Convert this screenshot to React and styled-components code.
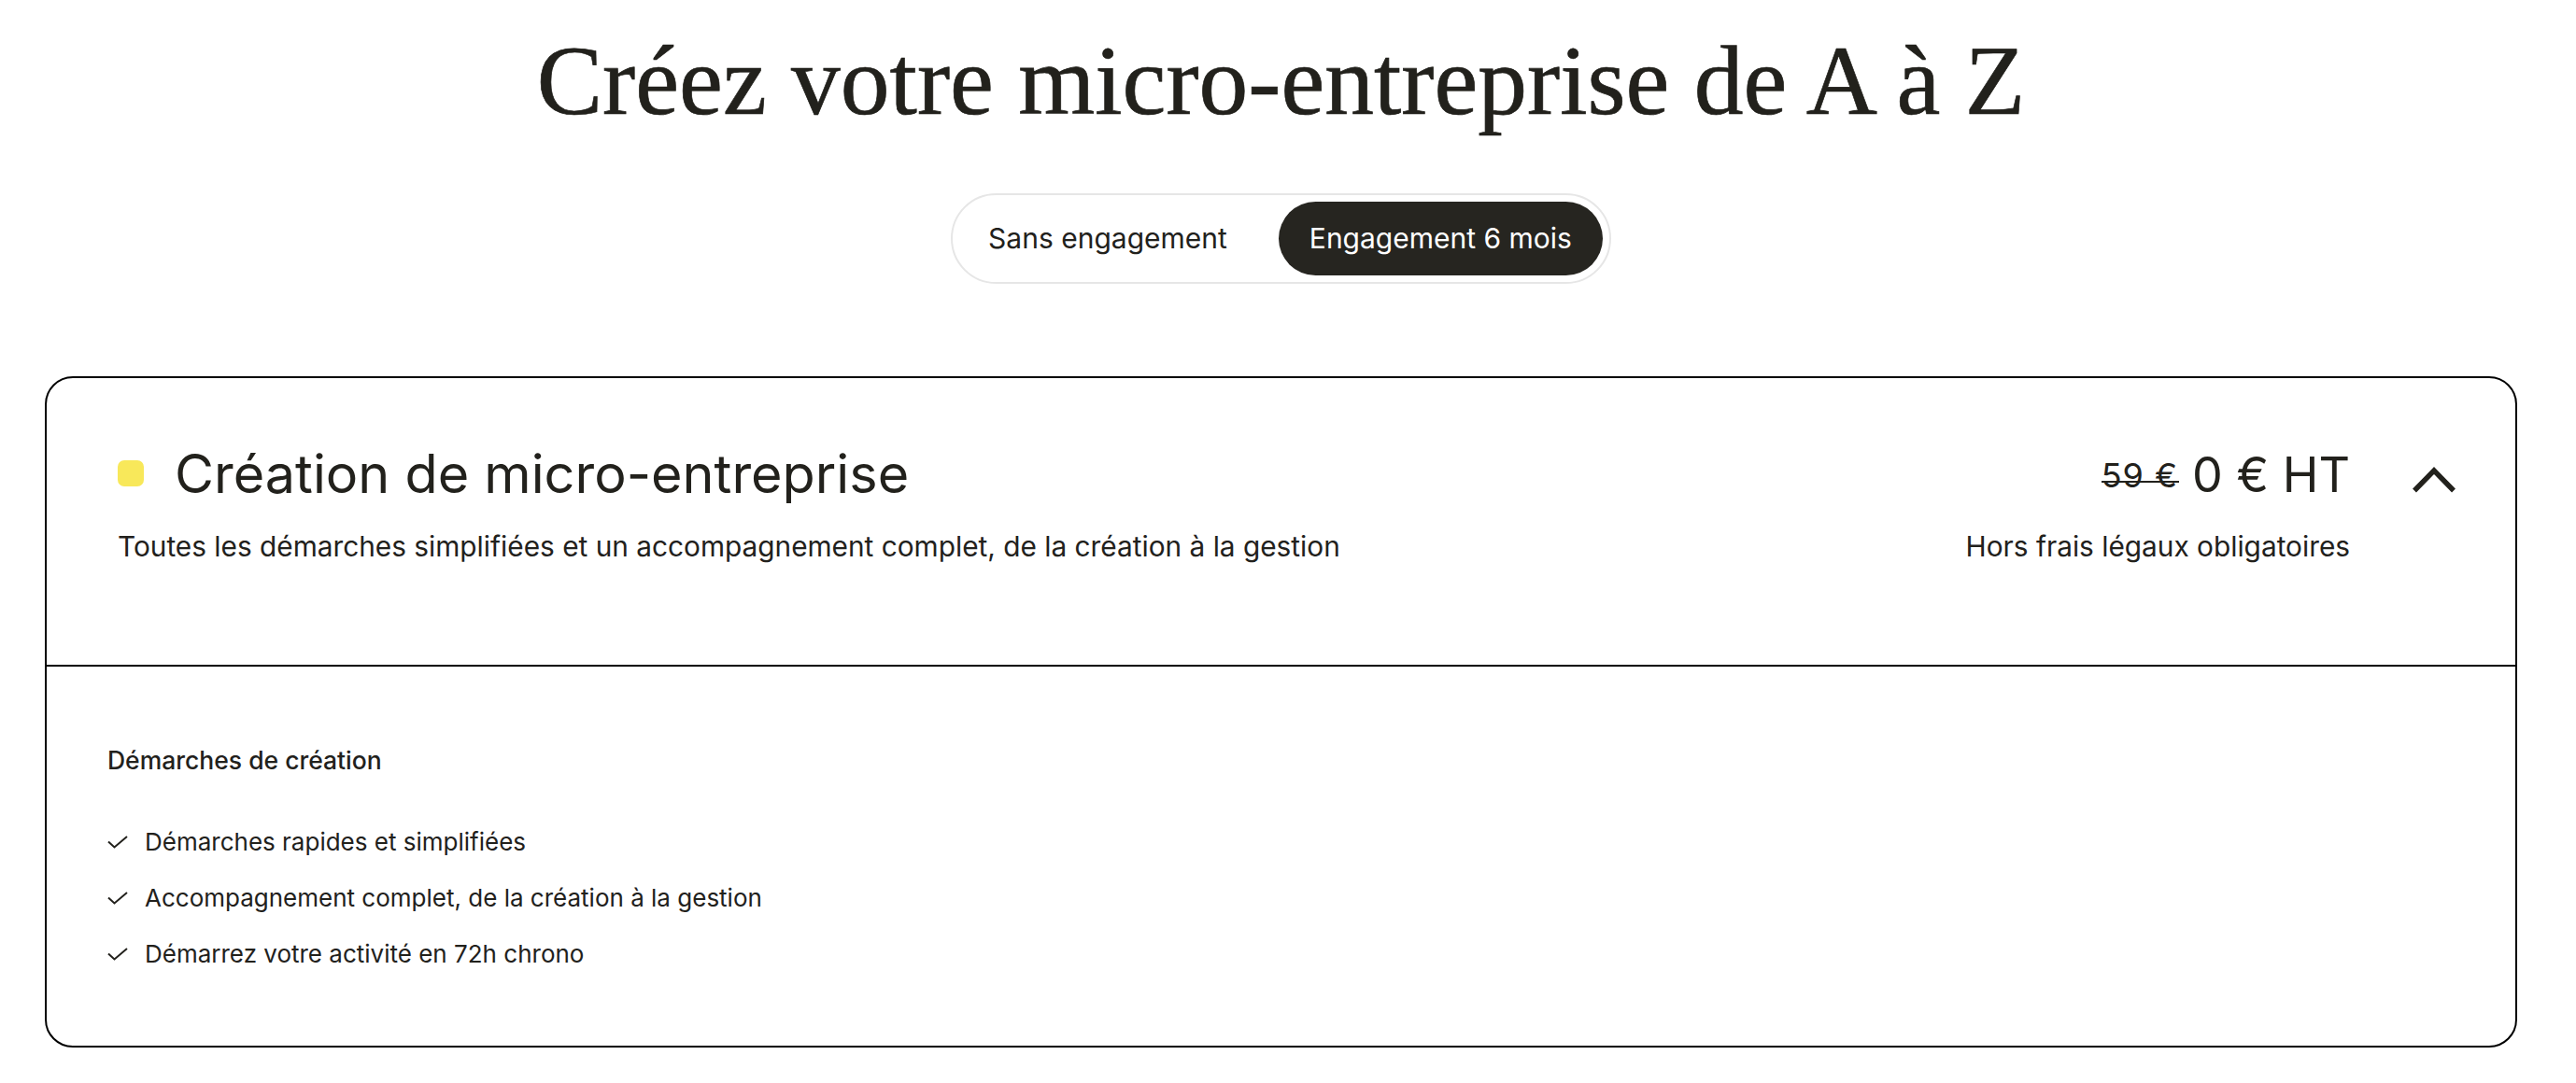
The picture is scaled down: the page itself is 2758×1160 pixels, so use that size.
import React, { useState } from "react";
import styled, { createGlobalStyle } from "styled-components";

const colors = {
  ink: "#22211c",
  pill: "#262520",
  yellow: "#f8e85a",
  toggleBorder: "#e6e6e6",
};

const GlobalStyle = createGlobalStyle`
  * { box-sizing: border-box; }
  body {
    margin: 0;
    background: #ffffff;
    color: ${colors.ink};
    font-family: Inter, "Noto Sans", sans-serif;
  }
`;

const Page = styled.main`
  margin-right: 15px;
  display: flex;
  flex-direction: column;
  align-items: center;
  padding-top: 24px;
`;

// the serif title is a bit heavier than plain Liberation Serif
const Title = styled.h1`
  margin: 0;
  font-family: "Liberation Serif", "DejaVu Serif", serif;
  font-weight: 400;
  font-size: 105.5px;
  line-height: 1.2;
  color: ${colors.ink};
  -webkit-text-stroke: 0.7px ${colors.ink};
`;

const Toggle = styled.div`
  margin-top: 56px;
  display: flex;
  align-items: center;
  gap: 24px;
  padding: 7px;
  border: 2px solid ${colors.toggleBorder};
  border-radius: 999px;
`;

const ToggleButton = styled.button`
  height: 79px;
  padding: 0 ${(p) => (p.$active ? "33px" : "31px")};
  border: none;
  border-radius: 999px;
  background: ${(p) => (p.$active ? colors.pill : "transparent")};
  color: ${(p) => (p.$active ? "#ffffff" : colors.ink)};
  font-family: Inter, "Noto Sans", sans-serif;
  font-size: 30px;
  line-height: 1;
  cursor: pointer;
`;

const Card = styled.section`
  align-self: stretch;
  margin: 99px 48px 40px;
  border: 2px solid #000000;
  border-radius: 30px;
  overflow: hidden;
`;

const CardHeader = styled.div`
  display: flex;
  align-items: flex-start;
  padding: 69px 64px 109px 76px;
  border-bottom: 2px solid #000000;
`;

const HeaderMain = styled.div`
  flex: 1;
  display: flex;
  flex-direction: column;
  gap: 26px;
`;

const NameRow = styled.div`
  display: flex;
  align-items: center;
  gap: 33px;
`;

const Dot = styled.span`
  width: 28px;
  height: 28px;
  border-radius: 7px;
  background: ${colors.yellow};
  flex-shrink: 0;
`;

const Name = styled.h2`
  margin: 0;
  font-size: 57.5px;
  font-weight: 400;
  line-height: 67px;
`;

const Lead = styled.p`
  margin: 0;
  font-size: 29.8px;
  line-height: 36px;
`;

const PriceBox = styled.div`
  display: flex;
  flex-direction: column;
  align-items: flex-end;
  gap: 26px;
`;

const PriceRow = styled.div`
  height: 67px;
  padding-top: 4px;
  display: flex;
  align-items: center;
  gap: 15px;
`;

const OldPrice = styled.span`
  position: relative;
  font-size: 36px;
  line-height: 1;
  letter-spacing: 1px;
  &::after {
    content: "";
    position: absolute;
    left: 0;
    right: -1px;
    bottom: 10px;
    height: 2px;
    background: ${colors.ink};
  }
`;

const Price = styled.span`
  font-size: 52px;
  line-height: 1;
`;

const Chevron = styled.button`
  margin: 26px 0 0 67px;
  padding: 0;
  border: none;
  background: none;
  display: flex;
  cursor: pointer;
`;

const CardBody = styled.div`
  padding: 85px 65px 80px;
`;

const SectionTitle = styled.h3`
  margin: 0 0 55px;
  font-size: 26.5px;
  font-weight: 500;
  line-height: 30px;
`;

const List = styled.ul`
  margin: 0;
  padding: 0;
  list-style: none;
  display: flex;
  flex-direction: column;
  gap: 24px;
`;

const Item = styled.li`
  display: flex;
  align-items: center;
  gap: 18px;
  font-size: 26px;
  line-height: 36px;
`;

const CheckIcon = () => (
  <svg width="22" height="14" viewBox="0 0 22 14" fill="none">
    <polyline points="1,6.5 7.5,12.5 21,1" stroke={colors.ink} strokeWidth="2" />
  </svg>
);

const ChevronIcon = () => (
  <svg width="46" height="28" viewBox="0 0 46 28" fill="none">
    <polyline points="2,25.5 23,4 44,25.5" stroke={colors.ink} strokeWidth="5.5" />
  </svg>
);

const features = [
  "Démarches rapides et simplifiées",
  "Accompagnement complet, de la création à la gestion",
  "Démarrez votre activité en 72h chrono",
];

export default function App() {
  const [plan, setPlan] = useState("6mois");

  return (
    <Page>
      <GlobalStyle />
      <Title>Créez votre micro-entreprise de A à Z</Title>
      <Toggle>
        <ToggleButton $active={plan === "sans"} onClick={() => setPlan("sans")}>
          Sans engagement
        </ToggleButton>
        <ToggleButton $active={plan === "6mois"} onClick={() => setPlan("6mois")}>
          Engagement 6 mois
        </ToggleButton>
      </Toggle>

      <Card>
        <CardHeader>
          <HeaderMain>
            <NameRow>
              <Dot />
              <Name>Création de micro-entreprise</Name>
            </NameRow>
            <Lead>
              Toutes les démarches simplifiées et un accompagnement complet, de la création à la gestion
            </Lead>
          </HeaderMain>
          <PriceBox>
            <PriceRow>
              <OldPrice>59 €</OldPrice>
              <Price>0 € HT</Price>
            </PriceRow>
            <Lead>Hors frais légaux obligatoires</Lead>
          </PriceBox>
          <Chevron aria-label="Replier">
            <ChevronIcon />
          </Chevron>
        </CardHeader>
        <CardBody>
          <SectionTitle>Démarches de création</SectionTitle>
          <List>
            {features.map((f) => (
              <Item key={f}>
                <CheckIcon />
                {f}
              </Item>
            ))}
          </List>
        </CardBody>
      </Card>
    </Page>
  );
}
